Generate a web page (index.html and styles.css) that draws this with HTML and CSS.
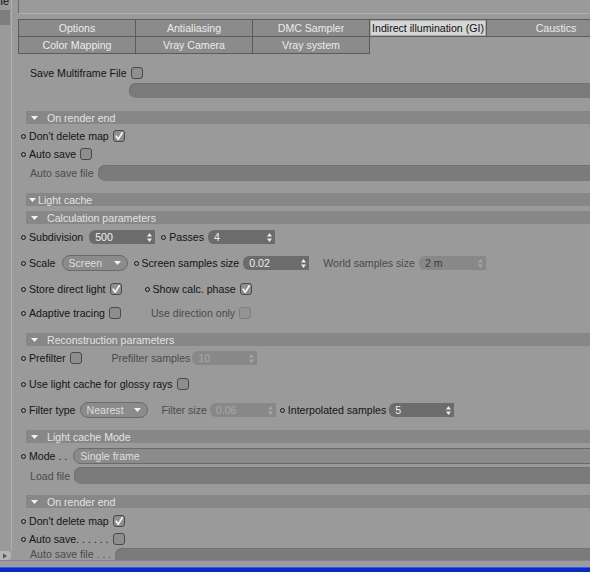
FILE: index.html
```html
<!DOCTYPE html>
<html>
<head>
<meta charset="utf-8">
<link rel="stylesheet" href="styles.css">
</head>
<body>
<div class="app">
  <div class="work">
    <aside class="side">
      <div class="side-col">
        <div class="side-title">ile</div>
        <div class="side-block"></div>
      </div>
      <div class="side-arrow"><svg width="10" height="8" viewBox="0 0 10 8"><path d="M3 1.5L7 4L3 6.5z" fill="#555"/></svg></div>
    </aside>
    <main class="main">
      <div class="topbar"></div>
      <div class="tabs">
        <div class="tabrow">
          <div class="tab">Options</div>
          <div class="tab">Antialiasing</div>
          <div class="tab">DMC Sampler</div>
          <div class="tab active">Indirect illumination (GI)</div>
          <div class="tab last">Caustics</div>
        </div>
        <div class="tabrow second">
          <div class="tab">Color Mapping</div>
          <div class="tab">Vray Camera</div>
          <div class="tab">Vray system</div>
        </div>
      </div>

      <div class="row plain h15 mt11">
        <span>Save Multiframe File</span>
        <span class="cb"></span>
      </div>
      <div class="row h15 mt3 ind117"><span class="field"></span></div>

      <div class="hdr mt13"><svg class="tri" width="7" height="4" viewBox="0 0 7 4"><path d="M0 0H7L3.5 4z"/></svg><span>On render end</span></div>
      <div class="row bul h14 mt5">
        <span class="dot"></span><span>Don't delete map</span>
        <span class="cb on"><svg width="10" height="10" viewBox="0 0 10 10"><path d="M2.2 5.2L4.2 8.2L8.3 1.8"/></svg></span>
      </div>
      <div class="row bul h14 mt4">
        <span class="dot"></span><span>Auto save</span><span class="cb"></span>
      </div>
      <div class="row plain h16 mt4">
        <span class="dim">Auto save file</span><span class="field"></span>
      </div>

      <div class="hdr tight mt12"><svg class="tri" width="7" height="4" viewBox="0 0 7 4"><path d="M0 0H7L3.5 4z"/></svg><span>Light cache</span></div>
      <div class="hdr mt5"><svg class="tri" width="7" height="4" viewBox="0 0 7 4"><path d="M0 0H7L3.5 4z"/></svg><span>Calculation parameters</span></div>

      <div class="row bul h14 mt6">
        <span class="dot"></span><span>Subdivision</span>
        <span class="spin w66 ml2"><span>500</span><svg width="5" height="9" viewBox="0 0 5 9"><path d="M2.5 0L5 3.5H0zM2.5 9L5 5.5H0z"/></svg></span>
        <span class="dot ml2"></span><span>Passes</span>
        <span class="spin w67"><span>4</span><svg width="5" height="9" viewBox="0 0 5 9"><path d="M2.5 0L5 3.5H0zM2.5 9L5 5.5H0z"/></svg></span>
      </div>

      <div class="row bul h16 mt11">
        <span class="dot"></span><span>Scale</span>
        <span class="drop w66 ml2"><span>Screen</span><svg width="7" height="4" viewBox="0 0 7 4"><path d="M0 0H7L3.5 4z"/></svg></span>
        <span class="dot ml2"></span><span>Screen samples size</span>
        <span class="spin w66"><span>0.02</span><svg width="5" height="9" viewBox="0 0 5 9"><path d="M2.5 0L5 3.5H0zM2.5 9L5 5.5H0z"/></svg></span>
        <span class="dim ml10">World samples size</span>
        <span class="spin off dark w67"><span>2 m</span><svg width="5" height="9" viewBox="0 0 5 9"><path d="M2.5 0L5 3.5H0zM2.5 9L5 5.5H0z"/></svg></span>
      </div>

      <div class="row bul h14 mt11">
        <span class="dot"></span><span>Store direct light</span>
        <span class="cb on"><svg width="10" height="10" viewBox="0 0 10 10"><path d="M2.2 5.2L4.2 8.2L8.3 1.8"/></svg></span>
        <span class="dot ml19"></span><span>Show calc. phase</span>
        <span class="cb on"><svg width="10" height="10" viewBox="0 0 10 10"><path d="M2.2 5.2L4.2 8.2L8.3 1.8"/></svg></span>
      </div>

      <div class="row bul h14 mt10">
        <span class="dot"></span><span>Adaptive tracing</span>
        <span class="cb"></span>
        <span class="dim ml26">Use direction only</span>
        <span class="cb off"></span>
      </div>

      <div class="hdr mt13"><svg class="tri" width="7" height="4" viewBox="0 0 7 4"><path d="M0 0H7L3.5 4z"/></svg><span>Reconstruction parameters</span></div>

      <div class="row bul h14 mt5">
        <span class="dot"></span><span>Prefilter</span>
        <span class="cb"></span>
        <span class="dim ml26">Prefilter samples</span>
        <span class="spin off w65 mln2"><span>10</span><svg width="5" height="9" viewBox="0 0 5 9"><path d="M2.5 0L5 3.5H0zM2.5 9L5 5.5H0z"/></svg></span>
      </div>

      <div class="row bul h14 mt12">
        <span class="dot"></span><span>Use light cache for glossy rays</span>
        <span class="cb"></span>
      </div>

      <div class="row bul h16 mt11">
        <span class="dot"></span><span>Filter type</span>
        <span class="drop w68"><span>Nearest</span><svg width="7" height="4" viewBox="0 0 7 4"><path d="M0 0H7L3.5 4z"/></svg></span>
        <span class="dim ml10">Filter size</span>
        <span class="spin off w66 mln1"><span>0.06</span><svg width="5" height="9" viewBox="0 0 5 9"><path d="M2.5 0L5 3.5H0zM2.5 9L5 5.5H0z"/></svg></span>
        <span class="dot"></span><span>Interpolated samples</span>
        <span class="spin w65 mln1"><span>5</span><svg width="5" height="9" viewBox="0 0 5 9"><path d="M2.5 0L5 3.5H0zM2.5 9L5 5.5H0z"/></svg></span>
      </div>

      <div class="hdr mt12"><svg class="tri" width="7" height="4" viewBox="0 0 7 4"><path d="M0 0H7L3.5 4z"/></svg><span>Light cache Mode</span></div>

      <div class="row bul h16 mt5">
        <span class="dot"></span><span>Mode . .</span>
        <span class="drop wide ml2"><span>Single frame</span></span>
      </div>
      <div class="row plain h17 mt3">
        <span class="dim">Load file</span><span class="field"></span>
      </div>

      <div class="hdr mt11"><svg class="tri" width="7" height="4" viewBox="0 0 7 4"><path d="M0 0H7L3.5 4z"/></svg><span>On render end</span></div>
      <div class="row bul h14 mt6">
        <span class="dot"></span><span>Don't delete map</span>
        <span class="cb on"><svg width="10" height="10" viewBox="0 0 10 10"><path d="M2.2 5.2L4.2 8.2L8.3 1.8"/></svg></span>
      </div>
      <div class="row bul h14 mt4">
        <span class="dot"></span><span>Auto save. . . . . .</span><span class="cb"></span>
      </div>
      <div class="row plain h16 mt2 last-row">
        <span class="dim">Auto save file . . .</span><span class="field"></span>
      </div>
    </main>
  </div>
  <div class="gap"></div>
  <div class="taskbar"></div>
</div>
</body>
</html>
```

FILE: styles.css
```css
* { box-sizing: border-box; }
html, body { margin: 0; padding: 0; }
body {
  width: 590px;
  height: 572px;
  overflow: hidden;
  background: #9a9a9a;
  font-family: "Liberation Sans", Arial, sans-serif;
  font-size: 10.6px;
  color: #141414;
}
.app { height: 572px; display: flex; flex-direction: column; }
.work {
  height: 561px;
  display: flex;
  border-bottom: 1px solid #8a7ea2;
  overflow: hidden;
}
.gap { height: 6px; background: #9c9c9c; }
.taskbar {
  flex: 1;
  background: #0a2cc4;
  border-top: 1px solid #2e5bf2;
}

/* left strip */
.side { width: 12px; display: flex; flex-direction: column; flex-shrink: 0; }
.side-col {
  flex: 1;
  border-right: 1px solid #b0b0b0;
  overflow: hidden;
}
.side-title { margin: -5px 0 0 -2px; height: 13px; line-height: 13px; font-size: 11px; color: #111; }
.side-block { width: 10px; height: 15px; margin-top: 2px; background: #7e7e7e; }
.side-arrow {
  height: 9px;
  width: 11px;
  margin: 1px 0 0 0;
  background: #b4b4b4;
  border-radius: 0 3px 3px 0;
  display: flex;
  align-items: center;
}

/* main */
.main { flex: 1; overflow: hidden; min-width: 0; }
.topbar {
  height: 14px;
  margin-left: 6px;
  border-left: 1px solid #6c6c6c;
  border-bottom: 1px solid #b3b3b3;
}
.tabs { margin: 5px 0 0 6px; }
.tabrow { display: flex; width: 620px; }
.tabrow.second { margin-top: -1px; }
.tab {
  width: 118px;
  height: 18px;
  margin-left: -1px;
  border: 1px solid #5b5b5b;
  background: #8b8b8b;
  color: #ebebeb;
  display: flex;
  align-items: center;
  justify-content: center;
  white-space: nowrap;
}
.tab:first-child { margin-left: 0; }
.tab.active { background: #d6d6d6; color: #0e0e0e; box-shadow: inset 0 0 0 1px #a9a9a9; }
.tab.last { width: 140px; }

/* rows */
.row { display: flex; align-items: center; gap: 4px; white-space: nowrap; }
.row.bul { padding-left: 9px; }
.row.plain { padding-left: 18px; }
.row.bul > .dot + span { margin-left: -1px; }
.last-row { align-items: flex-start; line-height: 12px; }
.last-row .field { height: 16px; align-self: flex-start; }
.ind117 { padding-left: 117px; }
.h14 { height: 14px; }
.h15 { height: 15px; }
.h16 { height: 16px; }
.h17 { height: 17px; }
.mt2 { margin-top: 2px; }
.mt3 { margin-top: 3px; }
.mt4 { margin-top: 4px; }
.mt5 { margin-top: 5px; }
.mt6 { margin-top: 6px; }
.mt10 { margin-top: 10px; }
.mt11 { margin-top: 11px; }
.mt12 { margin-top: 12px; }
.mt13 { margin-top: 13px; }
.ml2 { margin-left: 2px; }
.ml10 { margin-left: 10px; }
.ml19 { margin-left: 19px; }
.ml26 { margin-left: 26px; }
.mln1 { margin-left: -1px; }
.mln2 { margin-left: -2px; }

.dim { color: #4b4b4b; }
.dot {
  width: 5px;
  height: 5px;
  border: 1px solid #161616;
  border-radius: 50%;
  flex-shrink: 0;
}

/* group headers */
.hdr {
  margin-left: 14px;
  height: 13px;
  background: #878787;
  color: #e3e3e3;
  display: flex;
  align-items: center;
  padding-left: 5px;
  gap: 9px;
  white-space: nowrap;
}
.hdr.tight { padding-left: 3px; gap: 2px; }
.tri path { fill: #f2f2f2; }

/* checkbox */
.cb {
  width: 12px;
  height: 12px;
  border: 1px solid #4a4a4a;
  border-radius: 3px;
  background: #8e8e8e;
  flex-shrink: 0;
  display: flex;
  align-items: center;
  justify-content: center;
}
.cb svg path { fill: none; stroke: #f4f4f4; stroke-width: 1.7; stroke-linecap: round; stroke-linejoin: round; }
.cb.off { border-color: #7e7e7e; background: #949494; }

/* text field */
.field {
  flex: 1;
  align-self: stretch;
  margin-right: -10px;
  background: #7b7b7b;
  border-radius: 7px 0 0 7px;
  box-shadow: inset 1px 1px 0 #737373;
}

/* spinner */
.spin {
  height: 14px;
  background: #6c6c6c;
  color: #efefef;
  border-radius: 6px 0 0 6px;
  display: flex;
  align-items: center;
  justify-content: space-between;
  padding: 0 3px 0 6px;
  flex-shrink: 0;
}
.spin svg path { fill: #ececec; }
.spin.off { background: #888888; color: #a9a9a9; }
.spin.off svg path { fill: #a6a6a6; }
.spin.off.dark { color: #3c3c3c; }
.w65 { width: 65px; }
.w66 { width: 66px; }
.w67 { width: 67px; }
.w68 { width: 68px; }

/* dropdown */
.drop {
  height: 16px;
  background: #8b8b8b;
  border: 1px solid #6a6a6a;
  border-radius: 8px;
  color: #dedede;
  display: flex;
  align-items: center;
  justify-content: space-between;
  padding: 0 6px 0 6px;
  flex-shrink: 0;
}
.drop svg path { fill: #f0f0f0; }
.drop.wide { flex: 1; margin-right: -10px; border-radius: 8px 0 0 8px; }
```
